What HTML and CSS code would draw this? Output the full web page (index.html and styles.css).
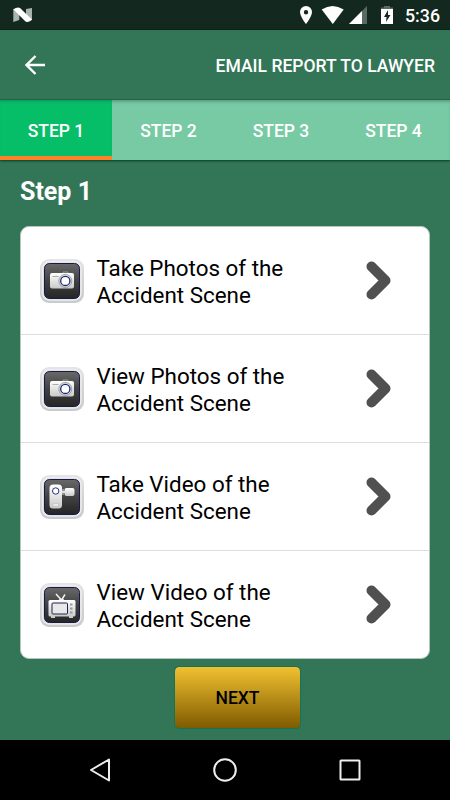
FILE: index.html
```html
<!DOCTYPE html>
<html lang="en">
<head>
<meta charset="utf-8">
<title>Email Report to Lawyer</title>
<link rel="stylesheet" href="styles.css">
</head>
<body>
<svg class="defs" width="0" height="0">
  <defs>
    <linearGradient id="rim" x1="0" y1="0" x2="0" y2="1"><stop offset="0" stop-color="#e4e4e4"/><stop offset=".5" stop-color="#d2d3d5"/><stop offset="1" stop-color="#c8cbcc"/></linearGradient>
    <linearGradient id="face" x1="0" y1="0" x2="0" y2="1"><stop offset="0" stop-color="#696969"/><stop offset=".5" stop-color="#414141"/><stop offset="1" stop-color="#252525"/></linearGradient>
    <linearGradient id="metal" x1="0" y1="0" x2="0" y2="1"><stop offset="0" stop-color="#fff"/><stop offset="1" stop-color="#c9c9c9"/></linearGradient>
    <symbol id="tile" viewBox="0 0 44 44">
      <rect x="0" y="0" width="44" height="44" rx="9" fill="url(#rim)"/>
      <rect x="2.500" y="2.500" width="38.500" height="38.500" rx="7" fill="none" stroke="#ececec" stroke-width="1.500"/>
      <rect x="4.500" y="4.500" width="35" height="35" rx="5" fill="url(#face)" stroke="#17194d"/>
    </symbol>
    <symbol id="camera" viewBox="0 0 44 44">
      <use href="#tile"/>
      <path d="M23 14v-1h5v1" fill="none" stroke="#999"/>
      <rect x="10" y="14" width="24" height="15.500" rx="2" fill="url(#metal)"/>
      <path d="M12.500 17.500h6" stroke="#aaa"/>
      <circle cx="25.300" cy="21.900" r="6.500" fill="#ddd" stroke="#777" stroke-width=".6"/>
      <circle cx="25.300" cy="21.900" r="4.600" fill="#fff" stroke="#1d2682" stroke-width="1.300"/>
    </symbol>
    <symbol id="camcorder" viewBox="0 0 44 44">
      <use href="#tile"/>
      <path d="M21 17h4" stroke="#ddd" stroke-width="2"/>
      <rect x="9.500" y="9.500" width="12.500" height="24" rx="3.500" fill="url(#metal)"/>
      <rect x="24.500" y="13" width="10" height="8" rx="2" fill="url(#metal)"/>
      <path d="M23 14v6" stroke="#ddd"/>
      <circle cx="15.700" cy="16" r="3.200" fill="#fff" stroke="#293080"/>
      <rect x="13" y="29" width="5.500" height="2" fill="#fff" stroke="#aaa" stroke-width=".5"/>
    </symbol>
    <symbol id="tv" viewBox="0 0 44 44">
      <use href="#tile"/>
      <path d="M16 11l5.500 6L25 11.500M19 17h5" fill="none" stroke="#f4f4f4" stroke-width="1.500"/>
      <path d="M11 34h4M29 34h4" stroke="#ccc" stroke-width="2"/>
      <rect x="8.500" y="17" width="27" height="16.500" rx="1.500" fill="url(#metal)"/>
      <rect x="12" y="20" width="15.500" height="11" rx="1" fill="#e8e8e8" stroke="#202350"/>
      <path d="M30 21.500h2.500M30 25.500h2.500M30 29.500h2.500" stroke="#999" stroke-width="2"/>
    </symbol>
    <symbol id="chevron" viewBox="0 0 26 41"><path d="M5.500 6.500L19.500 20.500L5.500 34.500" fill="none" stroke="#505050" stroke-width="10" stroke-linecap="round" stroke-linejoin="round"/></symbol>
  </defs>
</svg>
<div class="screen">
  <header class="status">
    <svg class="logo" width="20" height="16" viewBox="0 0 20 16"><path d="M.3 2l6-1v12l-6 2zM13 2l6-1v12l-6 2z" fill="#a9b4af"/><path d="M.5 2.500Q4-.3 7 1l12 11.500Q16 16 12.500 14.500z" fill="#fff"/></svg>
    <svg class="tray" width="94" height="18" viewBox="0 0 94 18">
      <path fill="#fff" fill-rule="evenodd" d="M6 0a6 6 0 0 0-6 6c0 4.500 6 12 6 12s6-7.500 6-12a6 6 0 0 0-6-6zm0 4a2.200 2.200 0 1 1 0 4.400A2.200 2.200 0 0 1 6 4z"/>
      <path fill="#fff" d="M21.700 3.500Q32.500-3.500 43.700 3.500L32.800 18z"/>
      <path fill="#586a62" d="M67 0v18H49z"/><path fill="#fff" d="M62 5V18H49z"/>
      <path fill="#586a62" d="M81 3V1.500h3V0h6v1.500h3V3z"/><path fill="#fff" d="M81 3h12v15H81z"/>
      <path fill="#13291f" d="M88 4l-4 7h2.500l-.5 5 4.500-7H88z"/>
    </svg>
    <span class="time">5:36</span>
  </header>
  <div class="appbar">
    <svg width="20" height="20" viewBox="0 0 20 20"><path d="M20 10H2M10.500 1L1.500 10l9 9" fill="none" stroke="#fff" stroke-width="2.400"/></svg>
    <span class="title">EMAIL REPORT TO LAWYER</span>
  </div>
  <nav class="tabs">
    <span class="tab active">STEP 1</span><span class="tab">STEP 2</span><span class="tab">STEP 3</span><span class="tab">STEP 4</span>
  </nav>
  <main class="content">
    <h1>Step 1</h1>
    <div class="card">
      <div class="row"><svg class="icon"><use href="#camera"/></svg><span class="label">Take Photos of the<br>Accident Scene</span><svg class="chev"><use href="#chevron"/></svg></div>
      <div class="row"><svg class="icon"><use href="#camera"/></svg><span class="label">View Photos of the<br>Accident Scene</span><svg class="chev"><use href="#chevron"/></svg></div>
      <div class="row"><svg class="icon"><use href="#camcorder"/></svg><span class="label">Take Video of the<br>Accident Scene</span><svg class="chev"><use href="#chevron"/></svg></div>
      <div class="row"><svg class="icon"><use href="#tv"/></svg><span class="label">View Video of the<br>Accident Scene</span><svg class="chev"><use href="#chevron"/></svg></div>
    </div>
    <button class="next">NEXT</button>
  </main>
  <footer class="navbar">
    <svg width="24" height="26" viewBox="0 0 24 26"><path d="M21 2.500v21L3 13z" fill="none" stroke="#eee" stroke-width="2" stroke-linejoin="round"/></svg>
    <svg width="24" height="26" viewBox="0 0 24 26"><circle cx="12" cy="13" r="10.800" fill="none" stroke="#eee" stroke-width="2"/></svg>
    <svg width="24" height="26" viewBox="0 0 24 26"><rect x="2.500" y="3.500" width="19" height="19" rx=".5" fill="none" stroke="#eee" stroke-width="2"/></svg>
  </footer>
</div>
</body>
</html>
```
FILE: styles.css
```css
* { box-sizing: border-box; }
body { margin: 0; font-family: Roboto, "Liberation Sans", sans-serif; }
svg { display: block; flex: none; }
.defs { position: absolute; }
.screen { width: 450px; height: 800px; display: flex; flex-direction: column; background: #327657; overflow: hidden; }
.status { height: 30px; display: flex; align-items: center; padding: 0 10px 0 13px; background: #13291f; border-bottom: 1px solid #0b2018; color: #fff; }
.logo { margin-top: 1px; }
.tray { margin-left: auto; margin-right: 11px; }
.time { width: 35px; font-size: 17.8px; font-weight: 500; line-height: 20px; white-space: nowrap; padding-top: 2px; }
.appbar { height: 70px; display: flex; align-items: center; justify-content: space-between; padding: 0 15px 0 25px; color: #fff; border-bottom: 1px solid #2b664b; }
.title { font-size: 17.55px; font-weight: 500; padding-top: 2px; white-space: nowrap; }
.tabs { height: 60px; display: grid; grid-template-columns: 112px 113px 112px 113px; background: #78caa5; box-shadow: 0 1px 2px #063c27, inset 0 3px 3px -1px #5ca180; }
.tab { display: flex; align-items: center; justify-content: center; color: #fff; font-size: 17.5px; font-weight: 500; padding-top: 2px; }
.active { background: #06bd68; border-bottom: 4px solid #ff8128; padding-top: 6px; box-shadow: inset 0 3px 3px -2px #079754; }
.content { height: 580px; padding: 0 20px; display: flex; flex-direction: column; align-items: center; }
h1 { align-self: stretch; margin: 0; height: 66px; padding-top: 17px; color: #fff; font-size: 25px; line-height: 30px; font-weight: 700; }
.card { width: 410px; height: 433px; background: #fff; border: 1px solid #b7c6be; border-radius: 9px; overflow: hidden; flex: none; }
.row { height: 108px; display: flex; align-items: center; padding: 0 37px 0 19px; border-bottom: 1px solid #ddd; }
.row:last-child { height: 107px; border-bottom: 0; }
.icon { width: 44px; height: 44px; margin-right: 12.5px; }
.label { flex: 1; color: #000; font-size: 22.4px; line-height: 26.4px; padding-top: 2px; white-space: nowrap; }
.chev { width: 26px; height: 41px; }
.next { width: 127px; height: 63px; margin: 7px 0 0 25px; border: 1px solid #147458; border-radius: 5px; background: linear-gradient(#f1c131, #805b00) padding-box; color: #000; font: 500 17.5px Roboto, sans-serif; padding: 1px 0 0; flex: none; }
.navbar { height: 60px; background: #000; display: grid; grid-template-columns: repeat(3, 125px); justify-content: center; align-items: center; justify-items: center; }
```
